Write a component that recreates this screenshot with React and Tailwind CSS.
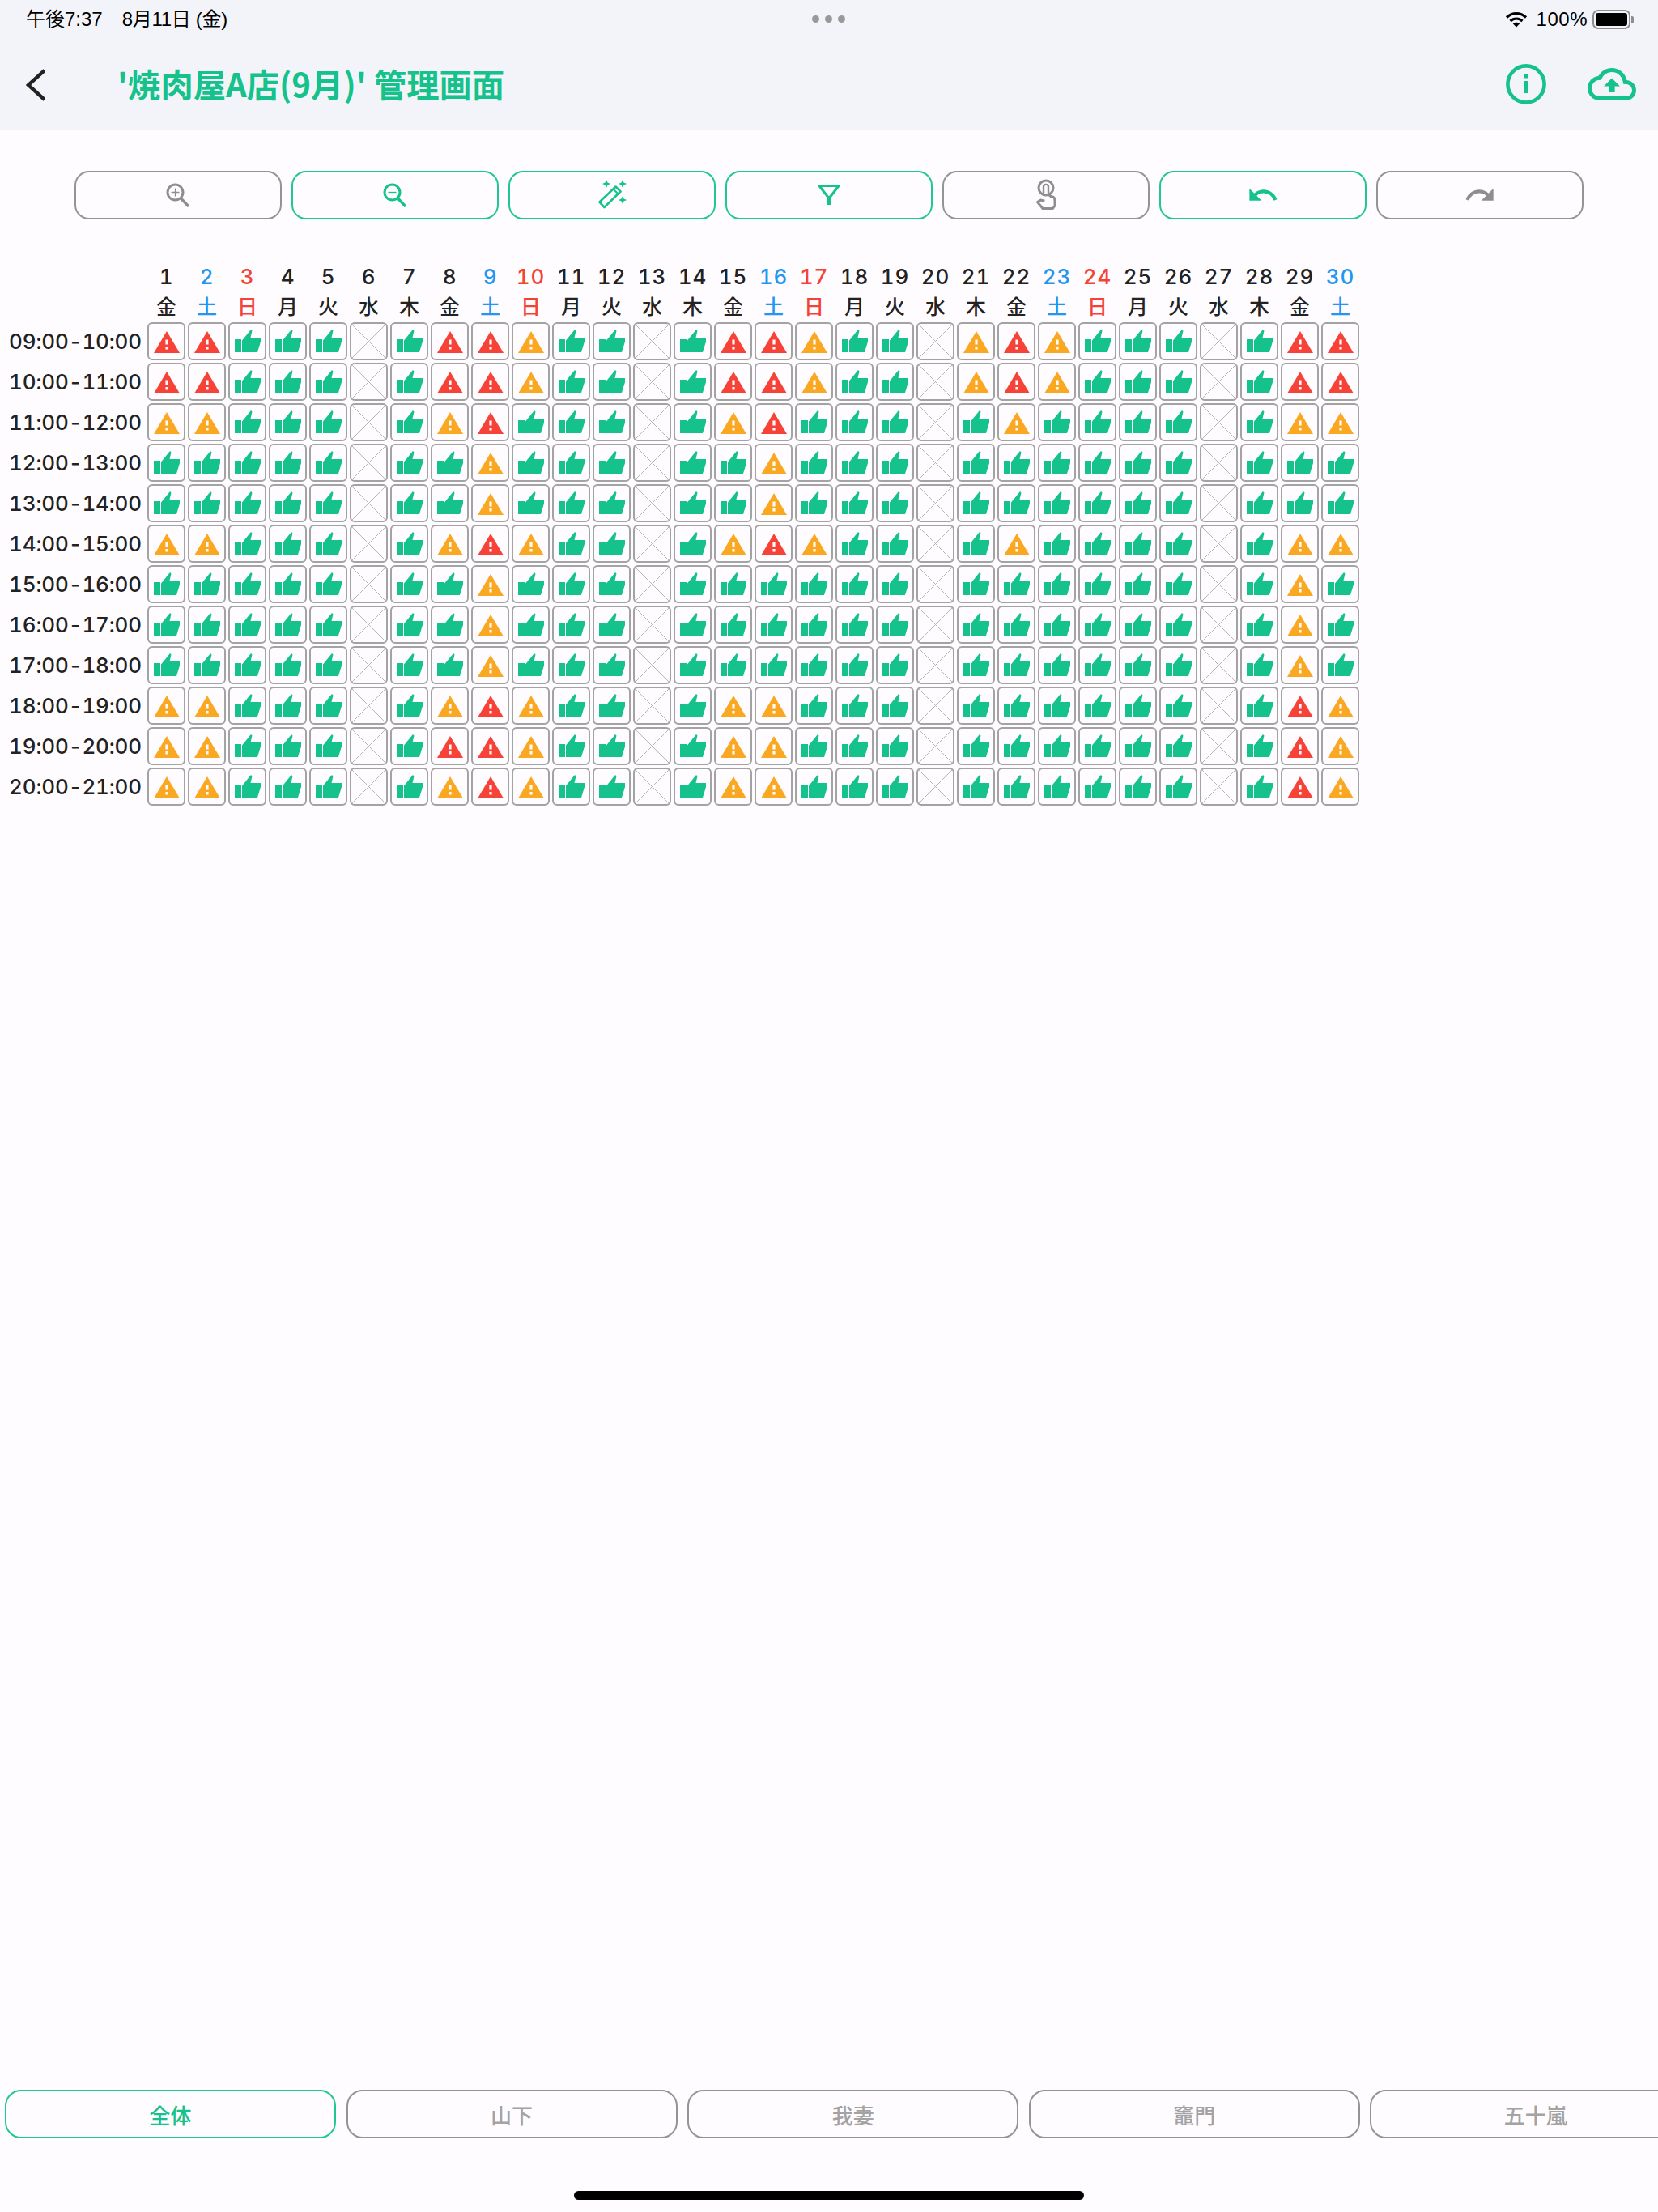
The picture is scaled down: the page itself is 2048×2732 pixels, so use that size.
import React from "react";

const GREEN = "#15c28c";
const days = [1,2,3,4,5,6,7,8,9,10,11,12,13,14,15,16,17,18,19,20,21,22,23,24,25,26,27,28,29,30];
const weekNames = ["金","土","日","月","火","水","木"];
const times = ["09:00-10:00","10:00-11:00","11:00-12:00","12:00-13:00","13:00-14:00","14:00-15:00","15:00-16:00","16:00-17:00","17:00-18:00","18:00-19:00","19:00-20:00","20:00-21:00"];
const rows = [
  "RRTTTXTRRYTTXTR"+"RYTTXYRYTTTXTRR",
  "RRTTTXTRRYTTXTR"+"RYTTXYRYTTTXTRR",
  "YYTTTXTYRTTTXTY"+"RTTTXTYTTTTXTYY",
  "TTTTTXTTYTTTXTT"+"YTTTXTTTTTTXTTT",
  "TTTTTXTTYTTTXTT"+"YTTTXTTTTTTXTTT",
  "YYTTTXTYRYTTXTY"+"RYTTXTYTTTTXTYY",
  "TTTTTXTTYTTTXTT"+"TTTTXTTTTTTXTYT",
  "TTTTTXTTYTTTXTT"+"TTTTXTTTTTTXTYT",
  "TTTTTXTTYTTTXTT"+"TTTTXTTTTTTXTYT",
  "YYTTTXTYRYTTXTY"+"YTTTXTTTTTTXTRY",
  "YYTTTXTRRYTTXTY"+"YTTTXTTTTTTXTRY",
  "YYTTTXTYRYTTXTY"+"YTTTXTTTTTTXTRY",
];

function CellIcon({ kind }) {
  if (kind === "X") {
    return (
      <svg viewBox="2 2 43 43" className="block w-full h-full">
        <path d="M3 3L44 44M44 3L3 44" stroke="#b6b6b6" strokeWidth="1" fill="none" />
      </svg>
    );
  }
  if (kind === "T") {
    return (
      <svg viewBox="2 2 43 43" className="block w-full h-full">
        <path fill={GREEN} d="M8 21H16V37H8Z" />
        <path fill={GREEN} d="M17 37V22.5L28 9L29.5 10.5L27.5 19H40V24L36 37Z" />
      </svg>
    );
  }
  const c = kind === "R" ? "#f64237" : "#faa822";
  return (
    <svg viewBox="2 2 43 43" className="block w-full h-full">
      <path fill={c} d="M24 11L40 38H8Z" />
      <path fill="#fffcff" d="M22.4 21.5H25.6V27.5H22.4ZM22.4 30H25.6V33.5H22.4Z" />
    </svg>
  );
}

function Cell({ kind }) {
  return (
    <div className="w-[47px] h-[47px] box-border border-2 border-[#a3a3a3] rounded-[6px] overflow-hidden">
      <CellIcon kind={kind} />
    </div>
  );
}

function ZoomIcon({ plus, c }) {
  return (
    <svg width="30" height="30" viewBox="0 0 30 30" fill="none" stroke={c} className="-ml-[2px]">
      <circle cx="12.5" cy="11.5" r="9.5" strokeWidth="3" />
      <path d="M19.5 19L29 29" strokeWidth="3.4" />
      <path d={plus ? "M7.5 11.5H17.5M12.5 6.5V16.5" : "M7.5 11.5H17.5"} strokeWidth="1.3" />
    </svg>
  );
}

function WandIcon({ c }) {
  return (
    <svg width="40" height="40" viewBox="0 0 40 40" className="ml-[3px]">
      <g fill="none" stroke={c} strokeWidth="2.6" strokeLinejoin="round">
        <path d="M2.5 28.5L22.5 9.5L28.5 15.5L8.5 35Z" />
        <path d="M19.5 12.5L25.5 18.5" strokeWidth="2" />
      </g>
      <path fill={c} d="M11 1L12.5 4.5L16 6L12.5 7.5L11 11L9.5 7.5L6 6L9.5 4.5Z" />
      <path fill={c} d="M31 1L32.5 4.5L36 6L32.5 7.5L31 11L29.5 7.5L26 6L29.5 4.5Z" />
      <path fill={c} d="M31 21L32.5 24.5L36 26L32.5 27.5L31 31L29.5 27.5L26 26L29.5 24.5Z" />
    </svg>
  );
}

function FilterIcon({ c }) {
  return (
    <svg width="28" height="28" viewBox="0 0 28 28" fill="none" stroke={c}>
      <path d="M2 2.5H26L14 18Z" strokeWidth="3" strokeLinejoin="round" />
      <path d="M14 15V26" strokeWidth="5" />
    </svg>
  );
}

function TouchIcon({ c }) {
  return (
    <svg width="30" height="40" viewBox="0 0 30 40" fill="none" stroke={c}>
      <circle cx="15" cy="11" r="9" strokeWidth="3" />
      <path d="M12 20V9.5C12 6 18 6 18 9.5V18.5" strokeWidth="2.4" />
      <path d="M12 25.5V27L8.5 26L4.5 28.5L11 36.5H23.5L26 33V26.5C26 23 24 21.5 21 21.5L18 19" strokeWidth="3" strokeLinejoin="round" />
    </svg>
  );
}

function UndoIcon({ c }) {
  return (
    <svg width="40" height="40" viewBox="0 0 24 24">
      <path fill={c} d="M12.5 8c-2.65 0-5.05.99-6.9 2.6L2 7v9h9l-3.62-3.62c1.39-1.16 3.16-1.88 5.12-1.88 3.54 0 6.55 2.31 7.6 5.5l2.37-.78C21.08 11.03 17.15 8 12.5 8z" />
    </svg>
  );
}

function RedoIcon({ c }) {
  return (
    <svg width="40" height="40" viewBox="0 0 24 24">
      <path fill={c} d="M18.4 10.6C16.55 8.99 14.15 8 11.5 8c-4.65 0-8.58 3.03-9.96 7.22L3.9 16c1.05-3.19 4.05-5.5 7.6-5.5 1.95 0 3.73.72 5.12 1.88L13 16h9V7l-3.6 3.6z" />
    </svg>
  );
}

function ToolButton({ active, children }) {
  return (
    <button
      className={
        "w-[256px] h-[60px] box-border border-2 rounded-[18px] flex items-center justify-center " +
        (active ? "border-[#1fc794]" : "border-[#949494]")
      }
    >
      {children}
    </button>
  );
}

function TabButton({ active, label }) {
  return (
    <button
      className={
        "w-[409px] h-[60px] shrink-0 box-border border-2 rounded-[20px] flex items-center justify-center text-[26px] font-medium " +
        (active ? "border-[#1fc794] text-[#15c28c]" : "border-[#949494] text-[#a3a3a3]")
      }
    >
      {label}
    </button>
  );
}

function dayColor(d) {
  const w = (d - 1) % 7;
  if (w === 1) return "text-[#2196f3]";
  if (w === 2) return "text-[#f44336]";
  return "text-[#222222]";
}

export default function App() {
  return (
    <div className="relative w-[2048px] h-[2732px] overflow-hidden bg-[#fffcff] flex flex-col font-['Inter','Noto_Sans_CJK_JP',sans-serif]">
      <header className="h-[160px] shrink-0 bg-[#f3f4f9] flex flex-col">
        <div className="relative h-[48px] pl-[32px] pr-[30px] flex items-center justify-between text-[24px] text-black font-['Liberation_Sans','Noto_Sans_CJK_JP',sans-serif]">
          <div className="flex gap-[24px]">
            <span>午後7:37</span>
            <span className="tracking-[-0.3px]">8月11日 (金)</span>
          </div>
          <div className="absolute left-[1003px] top-[19px] flex gap-[7px]">
            <div className="w-[9px] h-[9px] rounded-full bg-[#999999]" />
            <div className="w-[9px] h-[9px] rounded-full bg-[#999999]" />
            <div className="w-[9px] h-[9px] rounded-full bg-[#999999]" />
          </div>
          <div className="flex items-center">
            <svg width="28" height="20" viewBox="0 0 28 20" fill="none" stroke="#000" className="mr-[11px]">
              <path d="M2 7.5C9 1 19 1 26 7.5" strokeWidth="3.2" />
              <path d="M6.5 12C11 8 17 8 21.5 12" strokeWidth="3.2" />
              <path d="M14 19.5L9.8 15.2C12 13.2 16 13.2 18.2 15.2Z" fill="#000" stroke="none" />
            </svg>
            <span className="tracking-[0.5px]">100%</span>
            <div className="ml-[6px] w-[47px] h-[24px] box-border border-2 border-[#8e8e8e] rounded-[7px] p-[2px]">
              <div className="w-full h-full bg-black rounded-[3px]" />
            </div>
            <div className="w-[3px] h-[9px] bg-[#8e8e8e] rounded-r-[2px] ml-[1px]" />
          </div>
        </div>
        <div className="flex-1 flex items-start pl-[32px] pr-[27px]">
          <svg width="24" height="40" viewBox="0 0 24 40" fill="none" stroke="#222222" strokeWidth="4.4" className="mt-[37px] shrink-0">
            <path d="M23 2L3 20L23 38" />
          </svg>
          <h1 className="ml-[89px] mt-[30px] text-[40.3px] leading-[50px] font-bold text-[#15c28c] font-['Noto_Sans_CJK_JP',sans-serif]">
            '焼肉屋A店(9月)' 管理画面
          </h1>
          <svg width="50" height="50" viewBox="0 0 50 50" fill="none" className="ml-auto mt-[31px]">
            <circle cx="25" cy="25" r="22.6" stroke={GREEN} strokeWidth="4.6" />
            <path d="M22.7 12H27.3V17.5H22.7ZM22.7 21H27.3V36H22.7Z" fill={GREEN} />
          </svg>
          <svg width="60" height="60" viewBox="0 0 24 24" className="ml-[51px] mt-[26px]">
            <path fill={GREEN} d="M19.35 10.04C18.67 6.59 15.64 4 12 4 9.11 4 6.6 5.64 5.35 8.04 2.34 8.36 0 10.91 0 14c0 3.31 2.69 6 6 6h13c2.76 0 5-2.24 5-5 0-2.64-2.05-4.78-4.65-4.96zM19 18H6c-2.21 0-4-1.79-4-4 0-2.05 1.53-3.76 3.56-3.97l1.07-.11.5-.95C8.08 7.14 9.94 6 12 6c2.62 0 4.88 1.86 5.39 4.43l.3 1.5 1.53.11c1.56.1 2.78 1.41 2.78 2.96 0 1.65-1.35 3-3 3zM8 13h2.55v3h2.9v-3H16l-4-4z" />
          </svg>
        </div>
      </header>

      <div className="mt-[51px] ml-[92px] flex gap-[12px]">
        <ToolButton><ZoomIcon plus c="#8e8e8e" /></ToolButton>
        <ToolButton active><ZoomIcon c={GREEN} /></ToolButton>
        <ToolButton active><WandIcon c={GREEN} /></ToolButton>
        <ToolButton active><FilterIcon c={GREEN} /></ToolButton>
        <ToolButton><TouchIcon c="#8e8e8e" /></ToolButton>
        <ToolButton active><UndoIcon c={GREEN} /></ToolButton>
        <ToolButton><RedoIcon c="#8e8e8e" /></ToolButton>
      </div>

      <div className="mt-[54px] grid grid-cols-[179px_repeat(30,47px)] gap-[3px] w-max">
        <div />
        {days.map((d) => (
          <div key={d} className={"flex flex-col items-center h-[70px] " + dayColor(d)}>
            <span className="text-[26px] leading-[34px] font-medium tabular-nums tracking-[0.8px] whitespace-nowrap">{d}</span>
            <span className="text-[25px] leading-[36px] font-medium font-['Noto_Sans_CJK_JP',sans-serif]">{weekNames[(d - 1) % 7]}</span>
          </div>
        ))}
        {times.map((t, r) => (
          <React.Fragment key={t}>
            <div className="flex items-center justify-end pr-[4px] text-[26px] font-medium tabular-nums tracking-[-0.15px] text-[#222222] whitespace-nowrap">{t}</div>
            {rows[r].split("").map((k, i) => (
              <Cell key={i} kind={k} />
            ))}
          </React.Fragment>
        ))}
      </div>

      <div className="mt-auto pl-[6px] flex gap-[12.6px] font-['Noto_Sans_CJK_JP',sans-serif]">
        <TabButton active label="全体" />
        <TabButton label="山下" />
        <TabButton label="我妻" />
        <TabButton label="竈門" />
        <TabButton label="五十嵐" />
      </div>
      <div className="mt-[65px] mb-[15px] ml-[709px] w-[630px] h-[11px] rounded-full bg-black" />
    </div>
  );
}
